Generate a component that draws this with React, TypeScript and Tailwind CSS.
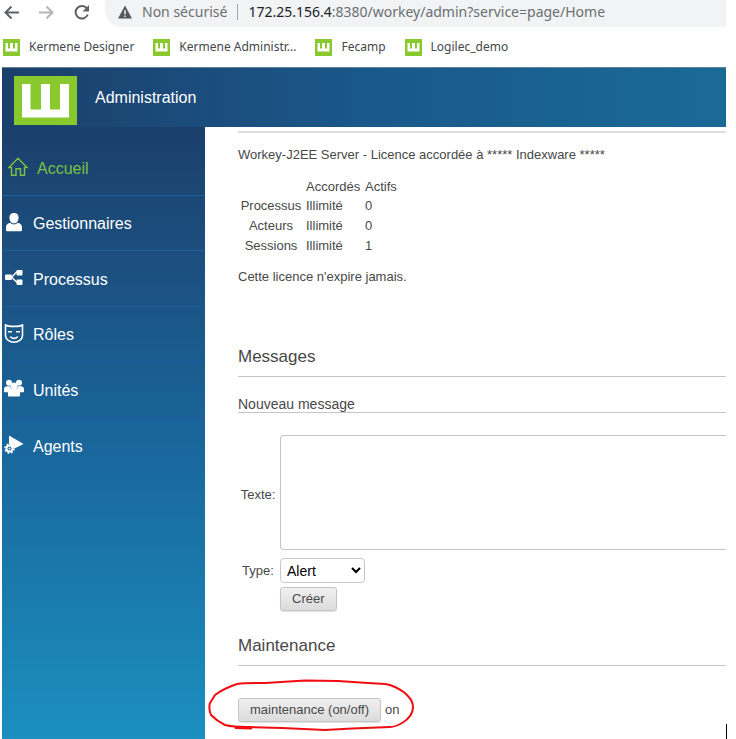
import { useState } from "react";
import type { ReactNode } from "react";
import clsx from "clsx";

const bookmarks = [
  "Kermene Designer",
  "Kermene Administr...",
  "Fecamp",
  "Logilec_demo",
];

const licences = [
  { name: "Processus", granted: "Illimité", active: 0 },
  { name: "Acteurs", granted: "Illimité", active: 0 },
  { name: "Sessions", granted: "Illimité", active: 1 },
];

function Logo({ className }: { className: string }) {
  return (
    <svg viewBox="0 0 63 49" preserveAspectRatio="none" className={className}>
      <rect width="63" height="49" fill="#89c92e" />
      <path d="M8 8h8.500v25.500h10.500V8h9v25.500h10V8h9v33.500H8z" fill="#fff" />
    </svg>
  );
}

function SmallLogo() {
  return (
    <svg viewBox="0 0 17 17" className="size-[17px]">
      <rect width="17" height="17" fill="#89c92e" />
      <path d="M2.500 4h2.500v5.500h2V4h3v5.500h2V4h2.500v8.500h-12z" fill="#fff" />
    </svg>
  );
}

function HomeIcon() {
  return (
    <svg
      viewBox="0 0 20 20"
      className="size-5"
      fill="none"
      stroke="currentColor"
      strokeWidth="1.400"
    >
      <path d="M3.500 10.500H1L10 1.300l9 9.200h-2.500v7.800h-4v-6.600h-4.500v6.600H3.500z" />
    </svg>
  );
}

function UserIcon() {
  return (
    <svg viewBox="0 0 20 20" className="size-5" fill="currentColor">
      <path d="M10 0c3 0 4.600 2 4.600 4.800S12.800 10.500 10 10.500 5.400 7.600 5.400 4.800 7 0 10 0z" />
      <path d="M2 17v-2.500c0-3 1.800-4.500 4.300-4.800 1 1.100 2.200 1.700 3.700 1.700s2.700-.6 3.700-1.700c2.500.3 4.300 1.800 4.300 4.800V17c0 .8-.5 1.300-1.300 1.300H3.300C2.500 18.300 2 17.800 2 17z" />
    </svg>
  );
}

function ProcessIcon() {
  return (
    <svg viewBox="0 0 20 20" className="size-5" fill="currentColor">
      <rect x="1" y="6.500" width="7" height="5.500" rx="1" />
      <rect x="12.500" y="2" width="6" height="5.500" rx="1" />
      <rect x="12.500" y="11.500" width="6" height="5.500" rx="1" />
      <path
        d="M8 9l5-5.500M8 9.500l5 5"
        fill="none"
        stroke="currentColor"
        strokeWidth="1.300"
      />
    </svg>
  );
}

function MaskIcon() {
  return (
    <svg
      viewBox="0 0 20 20"
      className="size-5"
      fill="none"
      stroke="currentColor"
      strokeWidth="1.600"
    >
      <path d="M1.500 1c2 1.200 4.500 1.400 8.500 1.400S16.500 2.200 18.500 1v10.500c0 4-4.500 6.700-8.500 6.700s-8.500-2.700-8.500-6.700z" />
      <path d="M4 7.800h4M12 7.800h4M6.300 12.500c1.200 2.500 6.200 2.500 7.400 0" />
    </svg>
  );
}

function GroupIcon() {
  return (
    <svg viewBox="0 0 20 20" className="size-5" fill="currentColor">
      <circle cx="5" cy="3.700" r="3" />
      <circle cx="15" cy="3.700" r="3" />
      <path d="M0 12.500V10c0-1.700 1.300-2.800 3-2.800h14c1.700 0 3 1.100 3 2.800v2.500c0 .5-.4.800-.8.800H.8c-.4 0-.8-.3-.8-.8z" />
      <circle cx="10" cy="6.800" r="3.400" />
      <path d="M4 16.500V13c0-2 1.500-3 3.500-3.200h5c2 .2 3.500 1.200 3.500 3.200v3.500c0 .6-.4 1-1 1H5c-.6 0-1-.4-1-1z" />
      <path
        d="M6.300 7.200c.2 1.500.9 2.400 1.700 3M13.700 7.200c-.2 1.500-.9 2.400-1.700 3"
        fill="none"
        stroke="#5f8fb8"
        strokeWidth="0.500"
      />
    </svg>
  );
}

function AgentIcon() {
  return (
    <svg viewBox="0 0 20 20" className="size-5" fill="currentColor">
      <path d="M5 0.500 19.500 9 10.500 13.500 5 9z" />
      <circle
        cx="5.500"
        cy="13.500"
        r="4.500"
        fill="none"
        stroke="currentColor"
        strokeWidth="1.500"
        strokeDasharray="1.900 1.630"
      />
      <circle cx="5.500" cy="13.500" r="4" />
      <circle cx="5.500" cy="13.500" r="2" fill="#1b6296" />
      <circle cx="5.500" cy="13.500" r="1" />
    </svg>
  );
}

const menu: { label: string; icon: ReactNode }[] = [
  { label: "Accueil", icon: <HomeIcon /> },
  { label: "Gestionnaires", icon: <UserIcon /> },
  { label: "Processus", icon: <ProcessIcon /> },
  { label: "Rôles", icon: <MaskIcon /> },
  { label: "Unités", icon: <GroupIcon /> },
  { label: "Agents", icon: <AgentIcon /> },
];

function BrowserBar() {
  return (
    <div className="font-['Noto_Sans','Open_Sans',sans-serif]">
      <div className="flex h-[27px] overflow-hidden">
        <div className="flex w-[105px] shrink-0 items-center pb-1 pl-1 text-[#5f6368]">
          <button aria-label="Précédent" className="mr-[19px]">
            <svg viewBox="0 0 16 16" className="size-4" fill="none" stroke="currentColor" strokeWidth="2">
              <path d="M15 8.500H1.500M7.500 2.500l-6 6 6 6" />
            </svg>
          </button>
          <button aria-label="Suivant" className="mr-[19px] text-[#b4b6b9]">
            <svg viewBox="0 0 16 16" className="size-4" fill="none" stroke="currentColor" strokeWidth="2">
              <path d="M0 8.500h13.500M7.500 2.500l6 6-6 6" />
            </svg>
          </button>
          <button aria-label="Actualiser">
            <svg viewBox="0 0 16 16" className="size-4" fill="none" stroke="currentColor" strokeWidth="2">
              <path d="M13 4.500A6.300 6.300 0 1 0 13.800 10.500" />
              <path d="M15 1v6.500H8.500z" fill="currentColor" stroke="none" />
            </svg>
          </button>
        </div>
        <div className="flex h-[27px] flex-1 items-center rounded-bl-2xl bg-[#f1f3f4] pb-1 pl-3 text-[14px] whitespace-nowrap text-[#6b6f73]">
          <svg viewBox="0 0 16 16" className="mr-[9px] h-[14px] w-4">
            <path d="M8 0.500 16 15.500H0z" fill="#55585c" />
            <path d="M7.200 6h1.600v4.500H7.200zM7.200 12h1.600v1.700H7.200z" fill="#fff" />
          </svg>
          <span>Non sécurisé</span>
          <span className="mx-[10px] h-4 w-px bg-[#a5a8ab]" />
          <span>
            <span className="text-[#202124]">172.25.156.4</span>
            :8380/workey/admin?service=page/Home
          </span>
        </div>
      </div>
      <nav className="flex h-10 items-center gap-[19px] pl-[3px] text-[12px] text-[#44474b]">
        {bookmarks.map((name) => (
          <a key={name} href="#" className="flex items-center gap-[9px] whitespace-nowrap">
            <SmallLogo />
            {name}
          </a>
        ))}
      </nav>
    </div>
  );
}

function Sidebar() {
  return (
    <nav className="w-[203px] shrink-0 bg-linear-to-b from-[#1b3f6b] via-[#19659a] to-[#1b8fc0] pt-[13px]">
      <ul className="grid h-[333px] grid-rows-6">
        {menu.map(({ label, icon }, i) => (
          <li
            key={label}
            className={clsx(i < menu.length - 1 && "border-b border-[#1f5ba0]")}
          >
            <a
              href="#"
              className={clsx(
                "flex h-full items-center gap-[9px] text-[16px]",
                i == 0 ? "pl-[6px] text-[#7ac143]" : "pl-[2px] text-white"
              )}
            >
              {icon}
              <span className="pt-[3px]">{label}</span>
            </a>
          </li>
        ))}
      </ul>
    </nav>
  );
}

function SectionTitle({ children }: { children: ReactNode }) {
  return (
    <h2 className="border-b border-[#c6c6c6] pb-[7px] text-[17px] leading-6">
      {children}
    </h2>
  );
}

const buttonClass =
  "h-6 rounded-[3px] border border-[#c4c4c4] bg-linear-to-b from-[#f0f0f0] to-[#dcdcdc] px-[11px] text-[13px] leading-5 shadow-[0_1px_1px_rgba(0,0,0,0.12)]";

export default function App() {
  const [text, setText] = useState("");
  const [type, setType] = useState("Alert");

  return (
    <div className="relative flex min-h-screen flex-col overflow-hidden bg-white pr-[10px] font-['Liberation_Sans',Arial,sans-serif] text-[#484848]">
      <BrowserBar />
      <div className="ml-[2px] flex flex-1 flex-col">
        <header className="flex h-[60px] items-center gap-[18px] border-t border-[#5f8199] bg-linear-to-r from-[#1b3f6b] via-[#19588a] to-[#1a6a98] pl-3 text-[16px] text-white">
          <Logo className="mt-[6px] h-[49px] w-[63px]" />
          <h1>Administration</h1>
        </header>
        <div className="flex flex-1">
          <Sidebar />
          <main className="min-w-0 flex-1 pt-1 pl-[33px] text-[13px] leading-5">
            <hr className="border-t-2 border-[#dedede]" />
            <p className="mt-3">
              Workey-J2EE Server - Licence accordée à ***** Indexware *****
            </p>
            <table className="mt-3 h-[78px] leading-[19px]">
              <thead>
                <tr>
                  <th className="w-[68px] p-0" />
                  <th className="w-[59px] p-0 text-left font-normal">Accordés</th>
                  <th className="p-0 text-left font-normal">Actifs</th>
                </tr>
              </thead>
              <tbody>
                {licences.map((l) => (
                  <tr key={l.name}>
                    <th className="p-0 pr-[2px] font-normal">{l.name}</th>
                    <td className="p-0">{l.granted}</td>
                    <td className="p-0">{l.active}</td>
                  </tr>
                ))}
              </tbody>
            </table>
            <p className="mt-3 mb-[58px]">Cette licence n'expire jamais.</p>

            <SectionTitle>Messages</SectionTitle>
            <h3 className="mt-[19px] mb-[22px] border-b border-[#c6c6c6] text-[14px] leading-4">
              Nouveau message
            </h3>
            <form
              className="mb-[23px] grid grid-cols-[40px_1fr] items-center gap-x-[2px]"
              onSubmit={(e) => e.preventDefault()}
            >
              <label htmlFor="texte" className="pb-1 text-center">
                Texte:
              </label>
              <textarea
                id="texte"
                value={text}
                onChange={(e) => setText(e.target.value)}
                className="mb-2 block h-[115px] w-full resize-none rounded-l border border-r-0 border-[#c4c4c4] p-1"
              />
              <label htmlFor="type" className="pb-1 text-center">
                Type:
              </label>
              <select
                id="type"
                value={type}
                onChange={(e) => setType(e.target.value)}
                className="mb-1 h-[25px] w-[85px] rounded border border-[#c8c8c8] bg-white pl-[2px] text-[14px] text-black"
              >
                <option>Alert</option>
                <option>Info</option>
              </select>
              <button type="submit" className={clsx(buttonClass, "col-start-2 justify-self-start")}>
                Créer
              </button>
            </form>

            <SectionTitle>Maintenance</SectionTitle>
            <div className="relative mt-8 flex items-center gap-1">
              <button className={buttonClass}>maintenance (on/off)</button>
              <span>on</span>
              {/* hand-drawn highlight */}
              <svg
                viewBox="0 0 210 58"
                className="pointer-events-none absolute -top-[21px] -left-[31px] h-[58px] w-[210px]"
                fill="none"
                stroke="#f00d12"
                strokeWidth="2"
                strokeLinecap="round"
                strokeLinejoin="round"
              >
                <path d="M30 7C40 5.500 50 6 58 6L98 3.500 131 4 161 6 178 7C185 8 190 10 198 16 204 22 206 25 206 30 206 37 202 42 195 46 190 49 187 50 183 50L145 51.500 118 53 75 51 40 50C28 50 22 49 18 48 12 45 7 41 4 38 2 33 2 29 3 26L8 18C12 15 18 11 30 7z" />
                <path d="M29 50.500 44 51" strokeWidth="3" />
              </svg>
            </div>
          </main>
        </div>
      </div>
      <span className="absolute right-[9px] bottom-0 h-[15px] w-px bg-black" />
    </div>
  );
}
